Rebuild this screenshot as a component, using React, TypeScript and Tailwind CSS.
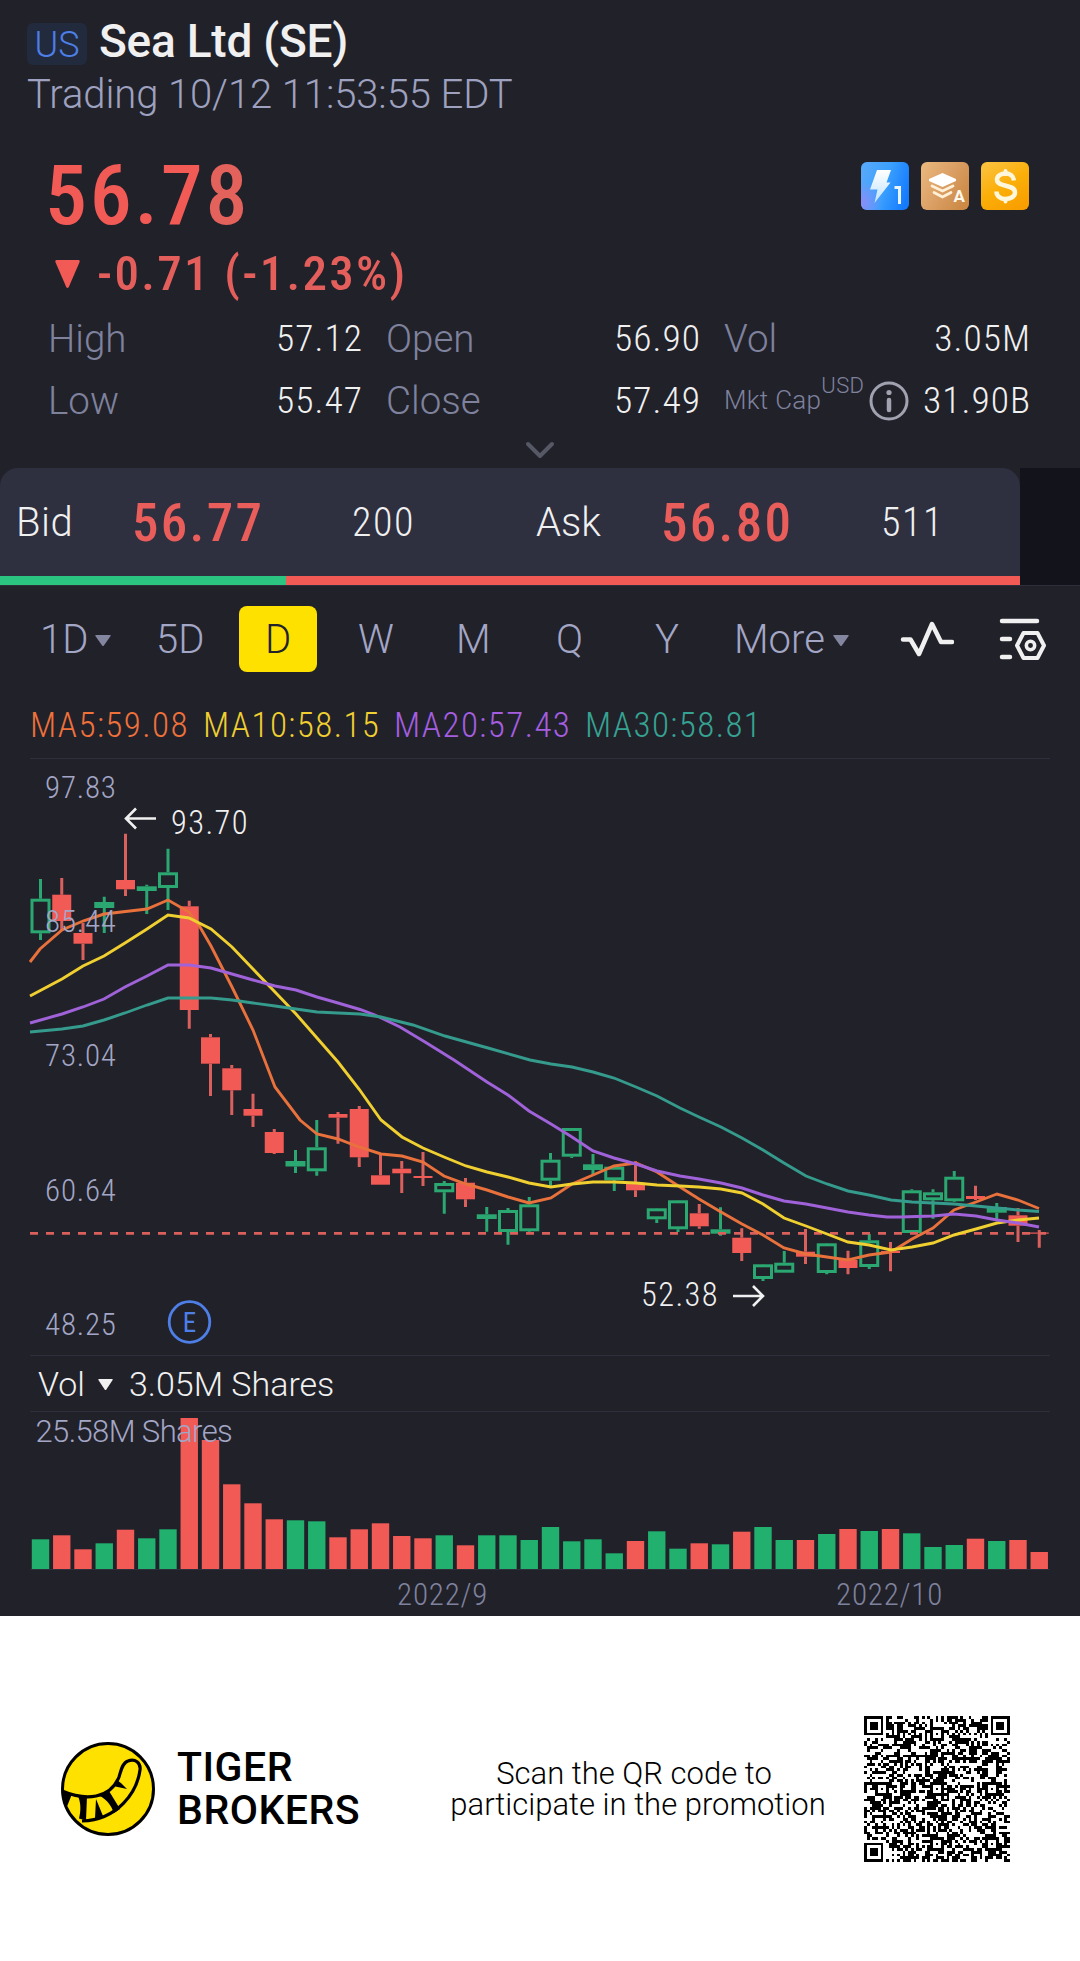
import { ReactNode } from "react";

type Candle = [up: number, top: number, bottom: number, high: number, low: number, vol: number];

const GREEN = "#21b06e";
const RED = "#f25a56";

const CANDLES: Candle[] = [
    [1, 898.7, 933.3, 879, 940, 29.7],
    [0, 894.7, 921, 878, 930, 33.7],
    [0, 933, 943.7, 923, 960, 19.7],
    [1, 902, 908, 896.7, 933, 25.7],
    [0, 880, 889.3, 833.7, 896, 39.3],
    [1, 886.3, 891, 884.7, 914, 30.7],
    [1, 872.3, 888, 848.7, 910, 39.7],
    [0, 906.3, 1010, 900.7, 1028.7, 151],
    [0, 1037.3, 1063.7, 1034, 1096, 129],
    [0, 1068.3, 1090.3, 1065, 1115, 84.7],
    [0, 1109, 1115.7, 1093.7, 1127, 65.7],
    [0, 1132, 1153, 1129, 1154, 49.7],
    [1, 1161, 1166.5, 1150, 1173, 48.7],
    [1, 1147.3, 1171.3, 1120, 1175.7, 47.7],
    [0, 1114, 1117.7, 1112, 1143.7, 31.7],
    [0, 1109, 1157.3, 1106, 1167, 39.7],
    [0, 1175.3, 1184.7, 1153, 1184.7, 45.7],
    [0, 1168.7, 1173.3, 1161, 1193, 33],
    [0, 1176, 1178, 1152, 1186, 30.7],
    [1, 1183, 1192.3, 1181, 1213.7, 33.7],
    [0, 1182.7, 1199.3, 1178, 1207, 23.7],
    [1, 1214.3, 1219, 1207, 1231.7, 33.7],
    [1, 1210, 1232, 1208, 1244.7, 33.7],
    [1, 1204.3, 1231.3, 1197, 1232, 29],
    [1, 1159.7, 1180.7, 1153, 1186.7, 42],
    [1, 1128, 1156.7, 1128, 1158, 27.7],
    [1, 1164.3, 1170, 1154, 1175, 29.7],
    [1, 1166.7, 1180.3, 1166, 1191, 15.7],
    [0, 1182.7, 1190.3, 1161.3, 1197, 28],
    [1, 1208.3, 1219.3, 1208, 1223, 37.7],
    [1, 1200.3, 1229.3, 1200, 1232, 20.3],
    [0, 1213.3, 1226.3, 1204, 1228.7, 25.7],
    [1, 1229.3, 1233.7, 1207.3, 1235.7, 24.7],
    [0, 1237.7, 1253, 1228.3, 1261, 37.3],
    [1, 1264.3, 1279, 1264, 1281, 42],
    [1, 1262.7, 1272.7, 1251, 1272.7, 29],
    [0, 1251.7, 1256.7, 1229, 1264, 29],
    [1, 1243.3, 1273, 1243, 1274.3, 35],
    [0, 1260, 1268, 1250.7, 1274.3, 40],
    [1, 1240.3, 1267, 1234, 1269, 38],
    [0, 1251, 1253, 1242, 1271.3, 40],
    [1, 1190.3, 1233, 1189.3, 1233.3, 35.7],
    [1, 1192.3, 1200.3, 1189.3, 1218.7, 22],
    [1, 1176.7, 1201.3, 1171, 1202, 24],
    [0, 1196, 1199, 1185.7, 1200, 30.3],
    [1, 1207, 1212.7, 1203, 1220, 28],
    [0, 1215.3, 1225.7, 1208, 1242, 29],
    [0, 1232.5, 1233.7, 1230, 1247.7, 17],
];

const AVERAGES = [
    {
        color: "#e8713c",
        points: "30,962 40,949 62,930 83,921 104,914 147,909 168,900 189,912 200,927 211,946 232,987 253,1030 275,1087 300,1120 317,1134 338,1139 359,1147 381,1154 402,1156 423,1162 444,1176 466,1184 487,1190 508,1197 529,1203 551,1198 572,1184 593,1175 614,1166 636,1163 657,1172 680,1187 699,1199 721,1212 742,1224 763,1235 784,1248 806,1254 827,1257 848,1260 869,1255 891,1252 912,1239 933,1228 954,1210 976,1202 997,1194 1018,1200 1039,1208.5",
    },
    {
        color: "#f0cf30",
        points: "30,996 62,979 83,966 104,956 125,943 147,929 168,915 189,918 211,929 232,947 253,969 275,992 296,1014 317,1038 338,1062 359,1089 381,1120 402,1137 423,1148 444,1157 466,1166 487,1172 508,1177 529,1183 551,1187 572,1184 593,1182 614,1182 636,1183 657,1185 680,1186 699,1187 721,1189 742,1193 763,1204 784,1218 806,1226 827,1234 848,1242 869,1245 891,1250 912,1247 933,1243 954,1235 976,1229 997,1223 1018,1220 1039,1218",
    },
    {
        color: "#a062d8",
        points: "30,1023 62,1014 83,1007 104,999 125,987 147,976 168,965 189,965 211,968 232,974 253,980 275,986 296,990 317,997 338,1003 360,1009.5 375,1015 400,1027 425,1042 454,1060 487,1082 508,1095 529,1111 551,1124 572,1137 593,1151 614,1158 636,1164 657,1171 680,1176 699,1179 721,1183 742,1188 763,1195 784,1201 806,1204 827,1208 848,1212 869,1215 887,1217 900,1217 933,1216 954,1214 976,1216 997,1220 1018,1223 1039,1227",
    },
    {
        color: "#359b8c",
        points: "30,1032 62,1029 83,1026 104,1020 125,1013 147,1005 168,998 211,998 232,1000 253,1003 275,1006 296,1009 317,1012 338,1013 360,1014 381,1017 413,1025 445,1036 488,1048 530,1060 551,1064 572,1067 593,1072 614,1078 636,1087 657,1096 680,1108 699,1117 721,1127 742,1138 763,1150 784,1163 806,1176 827,1184 848,1191 869,1195 891,1200 912,1202 954,1204 976,1206 997,1208 1018,1210 1039,1211.5",
    },
];

const QR_SIZE = 53;

function inFinder(x: number, y: number) {
    return (x < 8 && y < 8) || (x >= QR_SIZE - 8 && y < 8) || (x < 8 && y >= QR_SIZE - 8);
}

function qrPath() {
    const centers = [[26, 6], [6, 26], [26, 26], [46, 26], [26, 46], [46, 46]];
    let seed = 20221012;
    let d = "";
    for (let y = 0; y < QR_SIZE; y++) {
        for (let x = 0; x < QR_SIZE; x++) {
            seed = (Math.imul(seed, 1664525) + 1013904223) >>> 0;
            let on = seed / 4294967296 < 0.5;
            if (inFinder(x, y)) continue;
            if (x === 6 || y === 6) on = (x + y) % 2 === 0;
            for (const [cx, cy] of centers) {
                const r = Math.max(Math.abs(x - cx), Math.abs(y - cy));
                if (r <= 2) on = r !== 1;
            }
            if (on) d += `M${x} ${y}h1v1h-1z`;
        }
    }
    return d;
}

function QrCode() {
    return (
        <svg className="h-[146px] w-[146px]" viewBox={`0 0 ${QR_SIZE} ${QR_SIZE}`} shapeRendering="crispEdges">
            <path d={qrPath()} fill="#000"/>
            {[[0, 0], [QR_SIZE - 7, 0], [0, QR_SIZE - 7]].map(([x, y]) => (
                <g key={`${x}-${y}`} transform={`translate(${x} ${y})`}>
                    <path d="M0 0h7v7H0zM1 1v5h5V1zM2 2h3v3H2z" fill="#000" fillRule="evenodd"/>
                </g>
            ))}
        </svg>
    );
}

function Caret({ className }: { className: string }) {
    return (
        <svg className={className} viewBox="0 0 16 11" preserveAspectRatio="none">
            <path d="M1 0h14q1.200 0 .6 1L8.900 10.500q-.9 1-1.800 0L.4 1Q-.2 0 1 0z" fill="currentColor"/>
        </svg>
    );
}

function Badges() {
    return (
        <div className="mt-[18px] flex gap-3">
            <svg className="size-12" viewBox="0 0 48 48">
                <defs>
                    <linearGradient id="blue" x1="0" y1="0.3" x2="1" y2="0.6">
                        <stop offset="0" stopColor="#56a8fb"/>
                        <stop offset="0.5" stopColor="#3ba0fd"/>
                        <stop offset="1" stopColor="#147bff"/>
                    </linearGradient>
                    <radialGradient id="violet" cx="0" cy="0.85" r="0.45">
                        <stop offset="0" stopColor="#8b8cf8"/>
                        <stop offset="1" stopColor="#8b8cf8" stopOpacity="0"/>
                    </radialGradient>
                    <linearGradient id="bolt" x1="0" y1="0" x2="0" y2="1">
                        <stop offset="0" stopColor="#fff"/>
                        <stop offset="1" stopColor="#bfe2ff"/>
                    </linearGradient>
                </defs>
                <rect width="48" height="48" rx="6" fill="url(#blue)"/>
                <rect width="48" height="48" rx="6" fill="url(#violet)"/>
                <path d="M16 8h14l-4.500 12.500h4L13.500 41l3-13.500H9z" fill="url(#bolt)"/>
                <path d="M33.500 25.500h5V42" fill="none" stroke="#e8f4ff" strokeWidth="3"/>
            </svg>
            <svg className="size-12" viewBox="0 0 48 48">
                <defs>
                    <linearGradient id="bronze" x1="0" y1="0.1" x2="1" y2="0.7">
                        <stop offset="0" stopColor="#eab77c"/>
                        <stop offset="0.5" stopColor="#dba066"/>
                        <stop offset="1" stopColor="#cc8a45"/>
                    </linearGradient>
                </defs>
                <rect width="48" height="48" rx="6" fill="url(#bronze)"/>
                <path d="M21.500 11 35 17v2l-13.500 6L8 19v-2z" fill="#fff"/>
                <path d="m11 24 10.500 5L32 24M13 30.500l8.500 4.500 8.500-4.500" fill="none" stroke="#fff0d8" strokeWidth="2.800" strokeLinecap="round"/>
                <text x="32.500" y="40" fontSize="17" fontWeight="700" fill="#fff8ec" className="font-[Roboto]">A</text>
            </svg>
            <svg className="size-12" viewBox="0 0 48 48">
                <defs>
                    <linearGradient id="gold" x1="0.2" y1="0" x2="0.8" y2="1">
                        <stop offset="0" stopColor="#fbc13c"/>
                        <stop offset="0.5" stopColor="#fbae08"/>
                        <stop offset="1" stopColor="#f89e00"/>
                    </linearGradient>
                </defs>
                <rect width="48" height="48" rx="6" fill="url(#gold)"/>
                <path d="M33 18.500c-.5-4.500-4-7-8.500-7S16 14 16 17.500c0 8.500 18 4 18 13 0 4-4.500 6.500-9.500 6.500s-9-3-9-7.500" fill="none" stroke="#fff7dc" strokeWidth="4.500"/>
                <path d="M24.500 9v3M24.500 37v2.500" stroke="#fff7dc" strokeWidth="4" strokeLinecap="round"/>
            </svg>
        </div>
    );
}

function Stat({ label, value }: { label: ReactNode; value: string }) {
    return (
        <div className="flex items-center justify-between pt-[2px] whitespace-nowrap">
            <span className="flex items-center font-[Roboto] text-[38.5px] font-light text-[#7f829d]">{label}</span>
            <span className="-mr-px text-[37.5px] font-[350] tracking-[1px] text-[#f0f0f0]">{value}</span>
        </div>
    );
}

function Header() {
    return (
        <header className="flex h-[468px] flex-col pt-[23px]">
            <div className="flex h-[42px] items-center gap-3 pl-[27px] font-[Roboto]">
                <span className="flex h-[42px] w-[60px] items-center justify-center rounded-md bg-[#222a3d] pt-[2px] text-[36px] font-light text-[#4d7fe6]">US</span>
                <h1 className="-mt-[6px] text-[46px] leading-[42px] font-medium tracking-[-0.250px] text-[#f0f0f0]">Sea Ltd (SE)</h1>
            </div>
            <p className="mt-[1px] pl-[27px] font-[Roboto] text-[40px] leading-[58px] font-light tracking-[-0.100px] text-[#9ea1bf]">Trading 10/12 11:53:55 EDT</p>
            <div className="mt-5 flex items-start justify-between pr-[51px] pl-[45px]">
                <span className="h-[100px] text-[84px] leading-[103px] font-medium tracking-[2.800px] text-[#f25a56]">56.7<span className="text-[#e4625c]">8</span></span>
                <Badges/>
            </div>
            <div className="flex h-[59px] items-center pl-[55px] text-[#e45f5b]">
                <Caret className="mr-[17px] h-[28px] w-[25px] text-[#f25a56]"/>
                <span className="text-[49px] font-medium tracking-[2.300px]">-0.71 (-1.23%)</span>
            </div>
            <div className="grid grid-cols-[314px_314px_306px] grid-rows-[69px_55px] gap-x-6 pl-[48px]">
                <Stat label="High" value="57.12"/>
                <Stat label="Open" value="56.90"/>
                <Stat label="Vol" value="3.05M"/>
                <Stat label="Low" value="55.47"/>
                <Stat label="Close" value="57.49"/>
                <Stat
                    label={
                        <>
                            <span className="text-[26px] tracking-[0.300px]">Mkt Cap</span>
                            <span className="-mt-[30px] text-[22px] tracking-[0.400px]">USD</span>
                            <svg className="ml-[5px] size-10" viewBox="0 0 40 40">
                                <circle cx="20" cy="20" r="18" fill="none" stroke="#a0a2b0" strokeWidth="3"/>
                                <circle cx="20" cy="11.500" r="2.600" fill="#a0a2b0"/>
                                <path d="M20 19v10" stroke="#a0a2b0" strokeWidth="4.500" strokeLinecap="round"/>
                            </svg>
                        </>
                    }
                    value="31.90B"
                />
            </div>
            <svg className="mx-auto mt-[13px] h-[20px] w-[30px]" viewBox="0 0 30 20">
                <path d="m3 4 12 12L27 4" fill="none" stroke="#565866" strokeWidth="4" strokeLinecap="round" strokeLinejoin="round"/>
            </svg>
        </header>
    );
}

function QuoteBar() {
    return (
        <section className="flex h-[118px] border-b border-[#2e2f3b]">
            <div className="flex w-[1020px] flex-col">
                <div className="grid h-[108px] grid-cols-[116px_220px_184px_125px_220px_auto] items-center rounded-t-[18px] bg-[#2e2f3f] pt-[2px] pl-[16px] text-[40px] font-[350] tracking-[1.500px] text-[#f0f0f0]">
                    <span className="font-[Roboto] tracking-[0.500px]">Bid</span>
                    <span className="pt-[2px] text-[53px] font-medium tracking-[2.300px] text-[#e95d5b]">56.77</span>
                    <span>200</span>
                    <span className="font-[Roboto] tracking-normal">Ask</span>
                    <span className="pt-[2px] text-[53px] font-medium tracking-[2.300px] text-[#e95d5b]">56.80</span>
                    <span>511</span>
                </div>
                <div className="flex h-[9px]">
                    <div className="w-[286px] bg-[#2bc480]"/>
                    <div className="grow bg-[#f25a56]"/>
                </div>
            </div>
            <div className="grow bg-[#13131b]"/>
        </section>
    );
}

function Periods() {
    return (
        <nav className="flex h-[106px] items-center pl-[40px] font-[Roboto] text-[40px] leading-[66px] font-light text-[#a3a6c5]">
            <span className="flex w-[116px] items-center pt-[2px]">1D<Caret className="ml-[7px] h-[11px] w-4 text-[#8486a0]"/></span>
            <span className="w-[83px] pt-[2px]">5D</span>
            <span className="flex h-[66px] w-[78px] items-center justify-center rounded-lg bg-[#ffe100] pt-[2px] font-[350] text-[#22222c]">D</span>
            <span className="box-content w-[98px] pt-[2px] pl-[41px]">W</span>
            <span className="w-[100px] pt-[2px]">M</span>
            <span className="w-[99px] pt-[2px]">Q</span>
            <span className="w-[79px] pt-[2px]">Y</span>
            <span className="flex w-[166px] items-center pt-[2px]">More<Caret className="ml-[8px] h-[11px] w-4 text-[#8486a0]"/></span>
            <svg className="h-[40px] w-[54px]" viewBox="0 0 54 40">
                <path d="M3 20.500h7.500L19 35 32 5l9 18h11" fill="none" stroke="#f0f0f0" strokeWidth="4.500" strokeLinecap="round" strokeLinejoin="round"/>
            </svg>
            <svg className="ml-[45px] h-[44px] w-[48px]" viewBox="0 0 48 44">
                <path d="M3 4h35M3 22h8M3 40h8" stroke="#f0f0f0" strokeWidth="4.500" strokeLinecap="round"/>
                <path d="M24.500 16h14l6.500 12.500L38.500 41h-14L18 28.500z" fill="none" stroke="#f0f0f0" strokeWidth="4" strokeLinejoin="round"/>
                <circle cx="31.500" cy="28.500" r="4.200" fill="none" stroke="#f0f0f0" strokeWidth="3.500"/>
            </svg>
        </nav>
    );
}

function Legend() {
    return (
        <div className="flex h-[66px] pl-[30px] text-[35px] leading-[68px] font-light tracking-[1.400px]">
            <span className="w-[173px] text-[#f0713a]">MA5:59.08</span>
            <span className="w-[191px] text-[#f0cf30]">MA10:58.15</span>
            <span className="w-[191px] text-[#a55ee0]">MA20:57.43</span>
            <span className="text-[#36a392]">MA30:58.81</span>
        </div>
    );
}

const candleX = (i: number) => 40.5 + i * 21.25;

function PriceChart() {
    return (
        <svg className="block h-[598px] w-full" viewBox="0 758 1080 598">
            <path d="M30 758.500h1020M30 1355.500h1020" stroke="#2e2f3b" strokeWidth="1"/>
            {CANDLES.map(([up, top, bottom, high, low], i) => {
                const x = candleX(i);
                const color = up ? GREEN : RED;
                return (
                    <g key={i} stroke={up ? "#2ba771" : "#d9605d"} strokeWidth="3">
                        <path d={`M${x} ${high}V${top}M${x} ${bottom}V${low}`}/>
                        {up ? (
                            <rect x={x - 8.5} y={top + 1.5} width="17" height={Math.max(bottom - top - 3, 1)} fill="none"/>
                        ) : (
                            <rect x={x - 9.5} y={top} width="19" height={bottom - top} fill={color} stroke="none"/>
                        )}
                    </g>
                );
            })}
            <path d="M30 1233.300h1020" stroke="#d9605d" strokeWidth="2.800" strokeDasharray="8 8"/>
            {AVERAGES.map((line) => (
                <polyline key={line.color} points={line.points} fill="none" stroke={line.color} strokeWidth="2.900"/>
            ))}
            <g fill="#a3a6c5" fontSize="31" fontWeight="300" letterSpacing="0.8">
                <text x="45" y="798">97.83</text>
                <text x="45" y="932">85.44</text>
                <text x="45" y="1066">73.04</text>
                <text x="45" y="1201">60.64</text>
                <text x="45" y="1335">48.25</text>
            </g>
            <g fill="#f0f0f0" fontSize="32.500" fontWeight="350" letterSpacing="1.4">
                <text x="171" y="833.500">93.70</text>
                <text x="641" y="1306">52.38</text>
            </g>
            <path d="M156 818.500h-30M136 808.500l-10 10 10 10M733 1296h30M753 1286l10 10-10 10" fill="none" stroke="#f0f0f0" strokeWidth="2.600"/>
            <circle cx="189.500" cy="1322" r="20.300" fill="none" stroke="#4d7fe6" strokeWidth="2.800"/>
            <text x="189.500" y="1332" textAnchor="middle" fontSize="27" fill="#4d7fe6">E</text>
        </svg>
    );
}

function VolumeChart() {
    return (
        <>
            <div className="flex h-[55px] items-center pt-[2px] pl-[38px] font-[Roboto] text-[34px] font-[350] text-[#f0f0f0]">
                Vol
                <Caret className="mr-[16px] ml-[13px] h-[11px] w-[15px]"/>
                3.05M Shares
            </div>
            <svg className="block h-[205px] w-full" viewBox="0 1411 1080 205">
                <path d="M30 1411.500h1020M30 1569.500h1020" stroke="#2e2f3b" strokeWidth="1"/>
                {CANDLES.map(([up, , , , , vol], i) => (
                    <rect key={i} x={candleX(i) - 8.7} y={1569 - vol} width="17.400" height={vol} fill={up ? GREEN : RED}/>
                ))}
                <text x="35.500" y="1442" fontSize="31" fontWeight="300" letterSpacing="-0.6" fill="#a3a6c5" className="font-[Roboto]">25.58M Shares</text>
                <g fontSize="31" fontWeight="300" letterSpacing="0.8" fill="#7f829d">
                    <text x="397" y="1605">2022/9</text>
                    <text x="836" y="1605">2022/10</text>
                </g>
            </svg>
        </>
    );
}

function Logo() {
    return (
        <svg className="size-24" viewBox="0 0 96 96">
            <circle cx="48" cy="48" r="45.500" fill="#ffe100" stroke="#000" strokeWidth="3"/>
            <path d="M2 50C26 60 50 58 59 36c2-6 3-14 9-16 7-3 13 2 12 9-3 22-22 50-58 51" fill="none" stroke="#000" strokeWidth="3.200"/>
            <path d="M2 50l10 3-6 15zM18 55l9 .5-1 24-7-2c2-8 2-15-1-22.500zM36 58l7 17-8 2.500zM40 55l9-5 11 18-6 4c-3-8-7-13-14-17zM53 45l4-6 4.500 3.500L67 48z" fill="#000"/>
        </svg>
    );
}

function Footer() {
    return (
        <footer className="flex h-[345px] items-center bg-white pl-[60px] text-black">
            <Logo/>
            <div className="ml-[21px] w-[270px] font-[Roboto] text-[41px] leading-[43px] font-medium tracking-[0.500px]">
                TIGER
                <br/>
                BROKERS
            </div>
            <p className="w-[382px] text-center font-[Roboto] text-[31px] leading-[31px] font-light whitespace-nowrap">
                <span className="mr-[8px]">Scan the QR code to</span>
                <br/>
                participate in the promotion
            </p>
            <div className="ml-[35px]"><QrCode/></div>
        </footer>
    );
}

export default function App() {
    return (
        <main className="w-[1080px] overflow-hidden bg-[#21212a] font-['Roboto_Condensed',Roboto,sans-serif]">
            <Header/>
            <QuoteBar/>
            <Periods/>
            <Legend/>
            <PriceChart/>
            <VolumeChart/>
            <Footer/>
        </main>
    );
}
